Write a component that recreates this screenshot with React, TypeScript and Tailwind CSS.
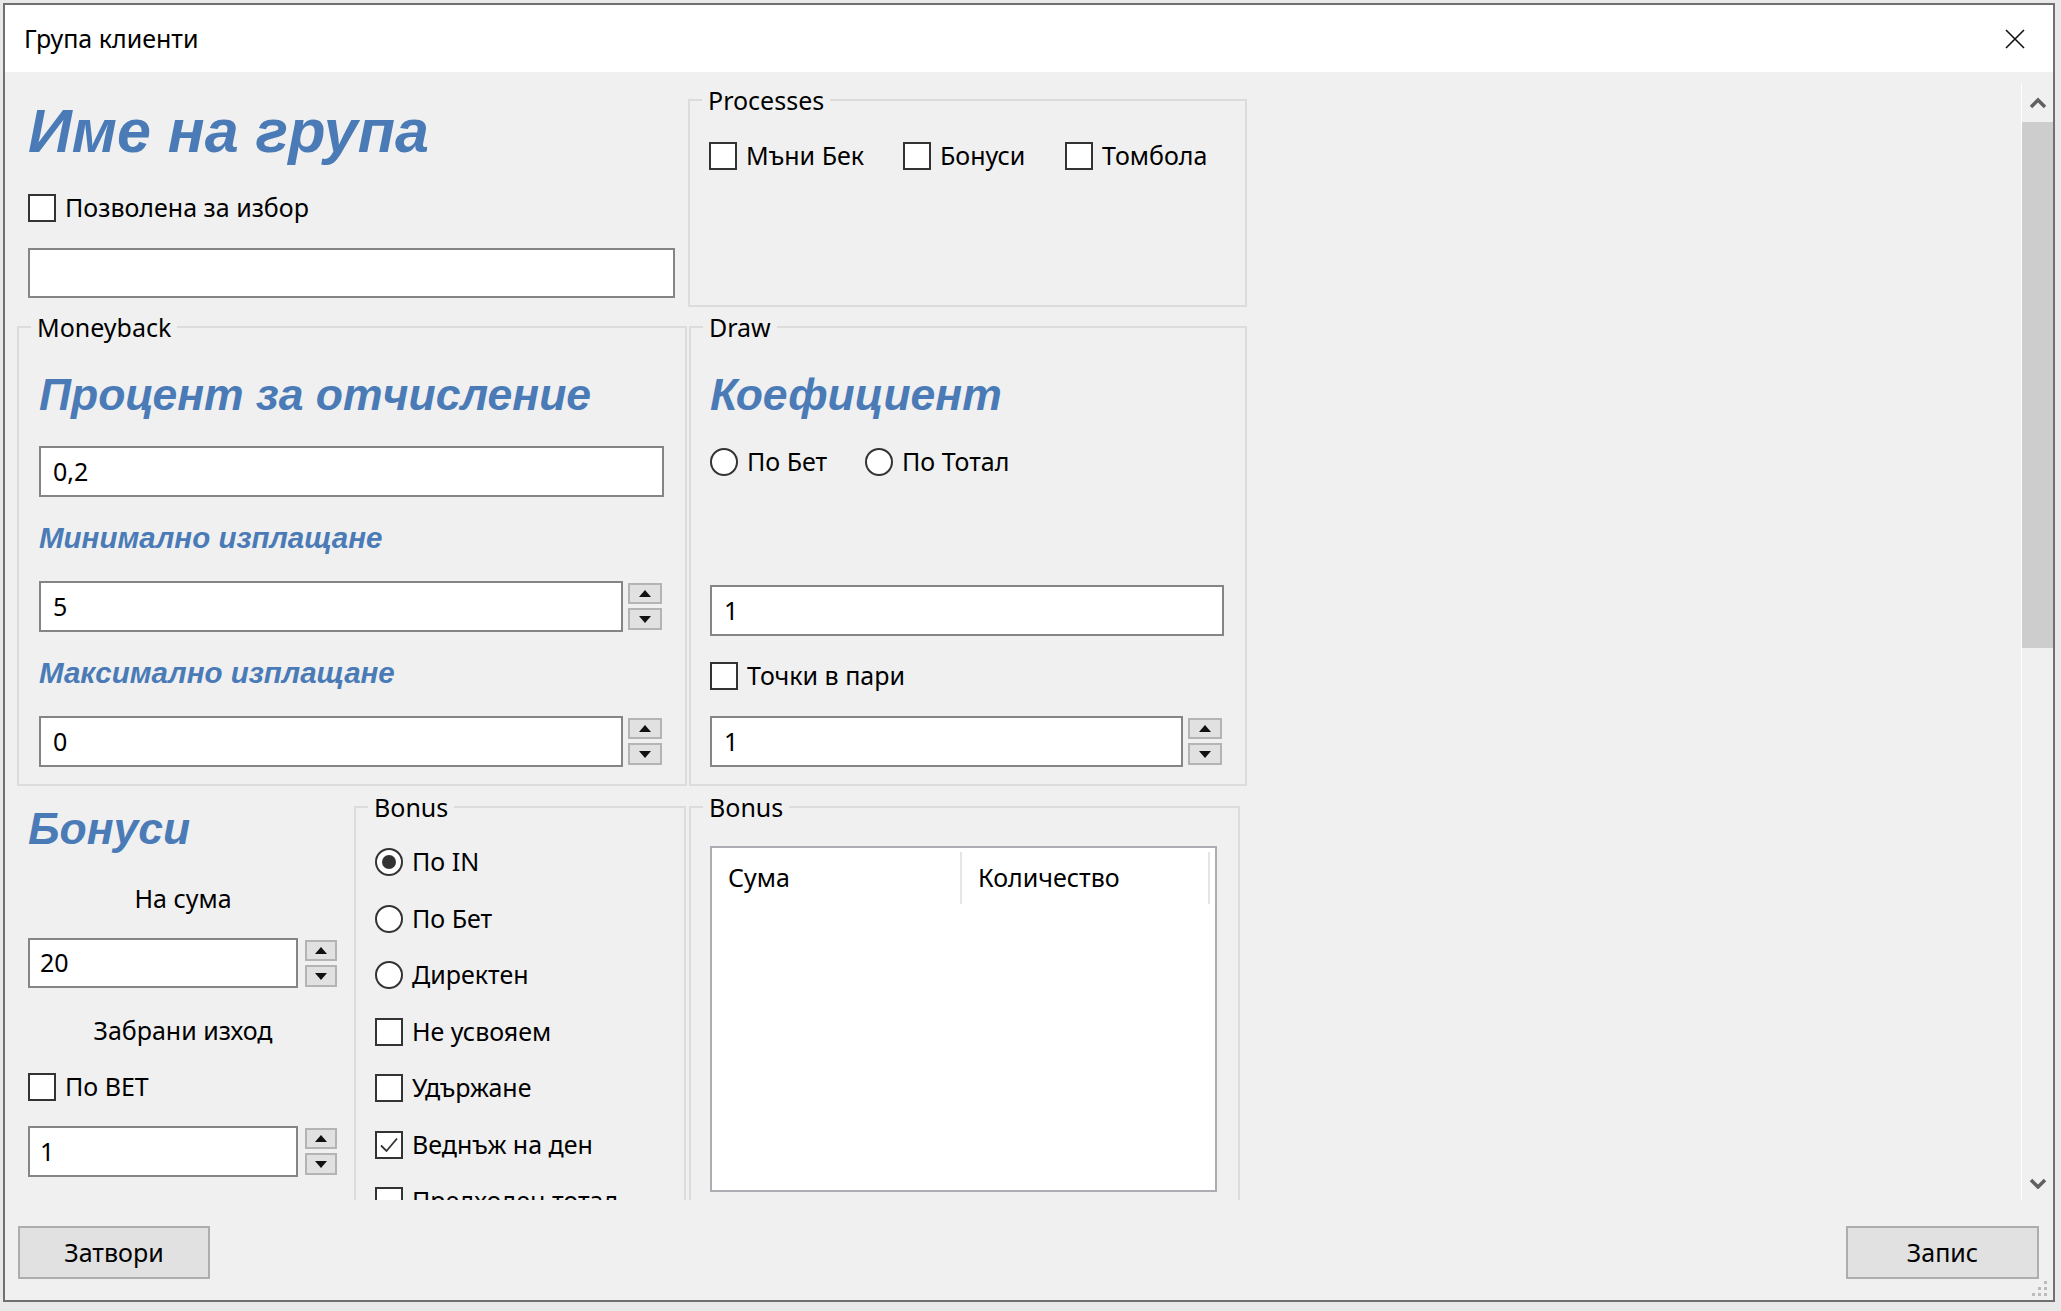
import React from "react";

const heading = "font-['Liberation_Sans',Arial,sans-serif] font-bold italic text-[#4a7bb7]";

function CheckBox({ checked }: { checked?: boolean }) {
  return (
    <span className="flex h-[28px] w-[28px] shrink-0 items-center justify-center border-2 border-[#333333] bg-white">
      {checked && (
        <svg width="22" height="22" viewBox="0 0 22 22">
          <path d="M3 11.5 L8.5 17 L19 4.5" fill="none" stroke="#333" strokeWidth="1.8" />
        </svg>
      )}
    </span>
  );
}

function Radio({ checked }: { checked?: boolean }) {
  return (
    <span className="flex h-[28px] w-[28px] shrink-0 items-center justify-center rounded-full border-2 border-[#333333] bg-white">
      {checked && <span className="h-[14px] w-[14px] rounded-full bg-[#333333]" />}
    </span>
  );
}

function Option({ label, radio, checked, className = "" }: { label: string; radio?: boolean; checked?: boolean; className?: string }) {
  return (
    <div className={`flex h-[30px] shrink-0 items-center gap-[9px] ${className}`}>
      {radio ? <Radio checked={checked} /> : <CheckBox checked={checked} />}
      <span className="whitespace-nowrap">{label}</span>
    </div>
  );
}

function Group({ label, className, children }: { label: string; className: string; children?: React.ReactNode }) {
  return (
    <fieldset className={`shrink-0 border-2 border-[#dcdcdc] ${className}`}>
      <legend className="ml-[12px] px-[6px] text-[25px] leading-[30px]">{label}</legend>
      {children}
    </fieldset>
  );
}

function SpinButtons({ w }: { w: string }) {
  return (
    <div className={`flex flex-col gap-[4px] pt-[2px] ${w}`}>
      <div className="flex h-[21px] items-center justify-center border-2 border-[#b4b4b4] bg-[#e1e1e1]">
        <svg width="12" height="7" viewBox="0 0 12 7">
          <polygon points="0,7 6,0 12,7" fill="#111" />
        </svg>
      </div>
      <div className="flex h-[22px] items-center justify-center border-2 border-[#b4b4b4] bg-[#e1e1e1]">
        <svg width="12" height="7" viewBox="0 0 12 7">
          <polygon points="0,0 12,0 6,7" fill="#111" />
        </svg>
      </div>
    </div>
  );
}

function Chevron({ down }: { down?: boolean }) {
  return (
    <svg width="18" height="12" viewBox="0 0 18 12">
      <polyline
        points={down ? "2,3 9,10 16,3" : "2,10 9,3 16,10"}
        fill="none"
        stroke="#606060"
        strokeWidth="3.5"
      />
    </svg>
  );
}

export default function App() {
  return (
    <div className="h-[1311px] w-[2061px] overflow-hidden bg-[#e9e9e9] pl-[3px] pt-[3px] font-['Noto_Sans','Open_Sans',sans-serif] text-[25px] text-black">
      <div className="relative flex h-[1299px] w-[2052px] flex-col border-2 border-[#707070] bg-[#f0f0f0]">
        {/* title bar */}
        <div className="flex h-[67px] shrink-0 items-center justify-between bg-white pl-[19px] pr-[28px]">
          <span className="text-[25px]">Група клиенти</span>
          <svg width="20" height="20" viewBox="0 0 20 20">
            <path d="M1 1 L19 19 M19 1 L1 19" stroke="#111" strokeWidth="1.6" />
          </svg>
        </div>

        <div className="flex flex-1 flex-col pt-[11px]">
          {/* scroll area */}
          <div className="flex h-[1117px] shrink-0">
            <div className="flex-1 overflow-hidden">
              <div className="flex flex-col pl-[12px] pt-[2px]">
                {/* row A */}
                <div className="flex h-[222px] shrink-0 items-start">
                  <div className="ml-[11px] flex w-[647px] flex-col">
                    <div className={`mt-[10px] text-[61px] leading-[72px] ${heading}`}>Име на група</div>
                    <Option label="Позволена за избор" className="mt-[26px]" />
                    <div className="mt-[25px] h-[50px] w-[647px] border-2 border-[#858585] bg-white" />
                  </div>
                  <Group label="Processes" className="ml-[13px] h-[222px] w-[559px]">
                    <div className="mt-[26px] flex pl-[19px]">
                      <Option label="Мъни Бек" className="w-[194px]" />
                      <Option label="Бонуси" className="w-[162px]" />
                      <Option label="Томбола" />
                    </div>
                  </Group>
                </div>

                {/* row B */}
                <div className="mt-[5px] flex h-[474px] shrink-0 items-start">
                  <Group label="Moneyback" className="h-[474px] w-[670px]">
                    <div className="flex flex-col pl-[20px]">
                      <div className={`mt-[26px] text-[44.5px] leading-[54px] ${heading}`}>Процент за отчисление</div>
                      <div className="mt-[24px] flex h-[51px] w-[625px] items-center border-2 border-[#858585] bg-white pl-[12px]">0,2</div>
                      <div className={`mt-[24px] text-[29.5px] leading-[34px] ${heading}`}>Минимално изплащане</div>
                      <div className="mt-[26px] flex h-[51px] gap-[5px]">
                        <div className="flex h-[51px] w-[584px] items-center border-2 border-[#858585] bg-white pl-[12px]">5</div>
                        <SpinButtons w="w-[34px]" />
                      </div>
                      <div className={`mt-[24px] text-[29.5px] leading-[34px] ${heading}`}>Максимално изплащане</div>
                      <div className="mt-[26px] flex h-[51px] gap-[5px]">
                        <div className="flex h-[51px] w-[584px] items-center border-2 border-[#858585] bg-white pl-[12px]">0</div>
                        <SpinButtons w="w-[34px]" />
                      </div>
                    </div>
                  </Group>
                  <Group label="Draw" className="ml-[2px] h-[474px] w-[558px]">
                    <div className="flex flex-col pl-[19px]">
                      <div className={`mt-[26px] text-[44.5px] leading-[54px] ${heading}`}>Коефициент</div>
                      <div className="mt-[25px] flex">
                        <Option radio label="По Бет" className="w-[155px]" />
                        <Option radio label="По Тотал" />
                      </div>
                      <div className="mt-[108px] flex h-[51px] w-[514px] items-center border-2 border-[#858585] bg-white pl-[12px]">1</div>
                      <Option label="Точки в пари" className="mt-[25px]" />
                      <div className="mt-[25px] flex h-[51px] gap-[5px]">
                        <div className="flex h-[51px] w-[473px] items-center border-2 border-[#858585] bg-white pl-[12px]">1</div>
                        <SpinButtons w="w-[34px]" />
                      </div>
                    </div>
                  </Group>
                </div>

                {/* row C */}
                <div className="mt-[6px] flex h-[420px] shrink-0 items-start">
                  <div className="ml-[11px] flex w-[310px] flex-col">
                    <div className={`mt-[10px] text-[44.5px] leading-[54px] ${heading}`}>Бонуси</div>
                    <div className="mt-[27px] text-center leading-[30px]">На сума</div>
                    <div className="mt-[25px] flex h-[50px] gap-[7px]">
                      <div className="flex h-[50px] w-[270px] items-center border-2 border-[#858585] bg-white pl-[10px]">20</div>
                      <SpinButtons w="w-[32px]" />
                    </div>
                    <div className="mt-[27px] text-center leading-[30px]">Забрани изход</div>
                    <Option label="По BET" className="mt-[27px]" />
                    <div className="mt-[24px] flex h-[51px] gap-[7px]">
                      <div className="flex h-[51px] w-[270px] items-center border-2 border-[#858585] bg-white pl-[10px]">1</div>
                      <SpinButtons w="w-[32px]" />
                    </div>
                  </div>
                  <Group label="Bonus" className="ml-[16px] h-[420px] w-[332px]">
                    <div className="mt-[25px] flex flex-col gap-[26.5px] pl-[19px]">
                      <Option radio checked label="По IN" />
                      <Option radio label="По Бет" />
                      <Option radio label="Директен" />
                      <Option label="Не усвояем" />
                      <Option label="Удържане" />
                      <Option checked label="Веднъж на ден" />
                      <Option label="Предходен тотал" />
                    </div>
                  </Group>
                  <Group label="Bonus" className="ml-[3px] h-[420px] w-[551px]">
                    <div className="pl-[19px] pt-[24px]">
                      <div className="h-[346px] w-[507px] border-2 border-[#abadb3] bg-white">
                        <div className="flex h-[58px] pt-[4px]">
                          <div className="flex h-[52px] w-[250px] items-center border-r-2 border-[#e5e5e5] pl-[16px]">Сума</div>
                          <div className="flex h-[52px] w-[248px] items-center border-r-2 border-[#e5e5e5] pl-[16px]">Количество</div>
                        </div>
                      </div>
                    </div>
                  </Group>
                </div>
              </div>
            </div>

            {/* scrollbar */}
            <div className="flex w-[32px] flex-col border-l border-white">
              <div className="flex h-[39px] items-center justify-center">
                <Chevron />
              </div>
              <div className="h-[526px] bg-[#cdcdcd]" />
              <div className="flex-1" />
              <div className="flex h-[34px] items-center justify-center">
                <Chevron down />
              </div>
            </div>
          </div>

          {/* footer */}
          <div className="flex flex-1 items-start justify-between pl-[13px] pr-[14px] pt-[26px]">
            <div className="flex h-[53px] w-[192px] items-center justify-center border-2 border-[#adadad] bg-[#e1e1e1]">Затвори</div>
            <div className="flex h-[53px] w-[193px] items-center justify-center border-2 border-[#adadad] bg-[#e1e1e1]">Запис</div>
          </div>
        </div>

        {/* size grip */}
        <svg className="absolute bottom-[3px] right-[5px]" width="18" height="18" viewBox="0 0 18 18">
          <rect x="14" y="2" width="3" height="3" fill="#bcbcbc" />
          <rect x="8" y="8" width="3" height="3" fill="#bcbcbc" />
          <rect x="14" y="8" width="3" height="3" fill="#bcbcbc" />
          <rect x="2" y="14" width="3" height="3" fill="#bcbcbc" />
          <rect x="8" y="14" width="3" height="3" fill="#bcbcbc" />
          <rect x="14" y="14" width="3" height="3" fill="#bcbcbc" />
        </svg>
      </div>
    </div>
  );
}
